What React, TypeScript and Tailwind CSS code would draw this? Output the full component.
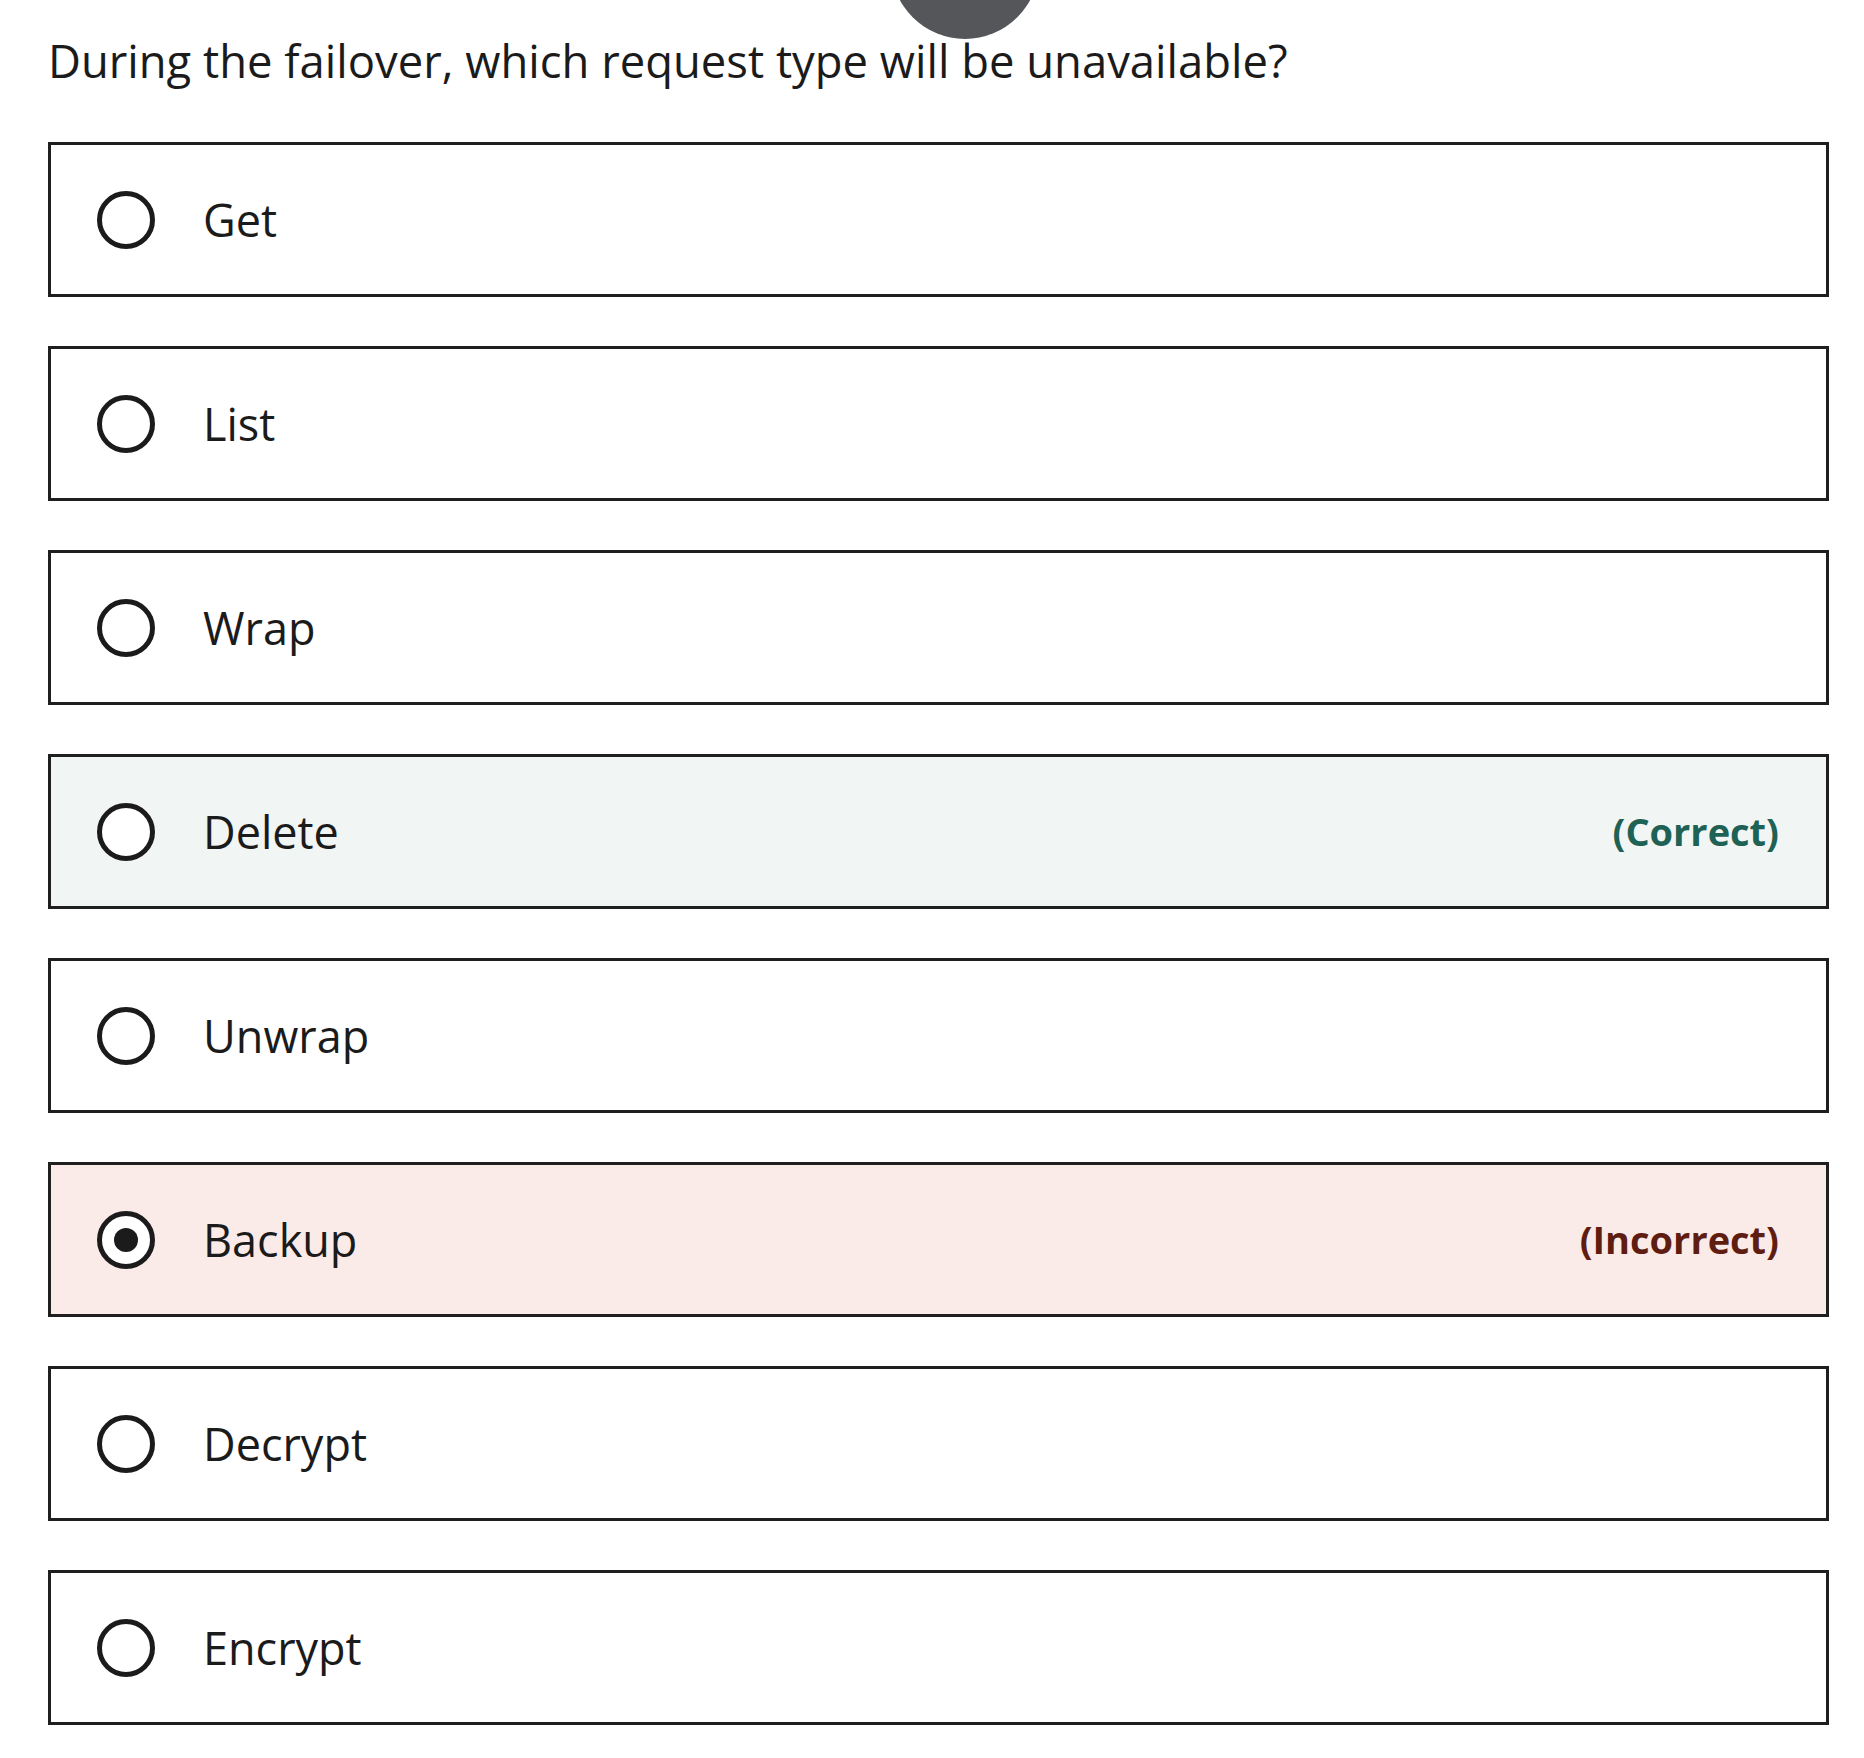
const OPTIONS = [
  { label: "Get" },
  { label: "List" },
  { label: "Wrap" },
  { label: "Delete", status: "correct" },
  { label: "Unwrap" },
  { label: "Backup", status: "incorrect", selected: true },
  { label: "Decrypt" },
  { label: "Encrypt" },
];

function Radio({ selected }: { selected?: boolean }) {
  return (
    <div className="w-[58px] h-[58px] shrink-0 rounded-full border-[5px] border-[#1b1b1b] bg-white flex items-center justify-center">
      {selected && <div className="w-[24px] h-[24px] rounded-full bg-[#1b1b1b]" />}
    </div>
  );
}

export default function App() {
  return (
    <div
      className="relative min-h-[1758px] bg-white text-[#1b1b1b] overflow-hidden"
      style={{ fontFamily: '"Open Sans", "Noto Sans", sans-serif' }}
    >
      {/* top scroll handle */}
      <div className="absolute left-[891px] top-[-109px] w-[148px] h-[148px] rounded-full bg-[#54565a]" />

      <div className="pl-[48px] pr-[35px] pt-[28px]">
        <h2 className="text-[45.4px] leading-[64px] font-normal mb-[50px]">
          During the failover, which request type will be unavailable?
        </h2>

        <div className="flex flex-col gap-[49px]">
          {OPTIONS.map((o) => (
            <div
              key={o.label}
              className={`h-[155px] border-[3px] border-[#1f1f1f] flex items-center pl-[46px] pr-[47px] ${
                o.status === "correct"
                  ? "bg-[#f1f5f3]"
                  : o.status === "incorrect"
                  ? "bg-[#fbebe8]"
                  : "bg-white"
              }`}
            >
              <Radio selected={o.selected} />
              <span className="ml-[48px] text-[45px] leading-none">{o.label}</span>
              {o.status === "correct" && (
                <span className="ml-auto text-[38px] font-bold text-[#1e6155]">(Correct)</span>
              )}
              {o.status === "incorrect" && (
                <span className="ml-auto text-[38px] font-bold text-[#5e1d10]">(Incorrect)</span>
              )}
            </div>
          ))}
        </div>
      </div>
    </div>
  );
}
